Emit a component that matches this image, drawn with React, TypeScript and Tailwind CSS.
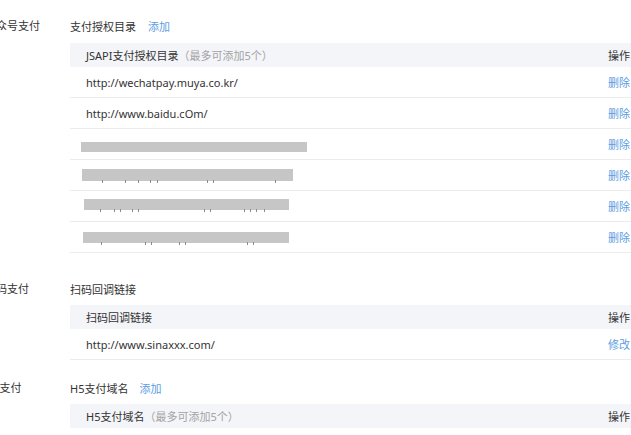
import React from "react";

const font = "font-['Noto_Sans','Noto_Sans_CJK_SC',sans-serif]";

function Header({ children }: { children: React.ReactNode }) {
  return (
    <div className="flex h-[24px] items-center bg-[#f4f5f9] text-[#333]">
      <div className="flex-1 pl-4">{children}</div>
      <div className="w-[62px]">操作</div>
    </div>
  );
}

function Row({ children, action }: { children: React.ReactNode; action: string }) {
  return (
    <div className="flex h-[31px] items-center border-b border-[#ececec] text-[#333]">
      <div className="flex flex-1 items-center pl-4">{children}</div>
      <div className="w-[62px] text-[#5c9de3]">{action}</div>
    </div>
  );
}

function Bar({ cls, ticks }: { cls: string; ticks: number[] }) {
  return (
    <div className={`relative bg-[#c6c6c6] ${cls}`}>
      {ticks.map((t, i) => (
        <span
          key={i}
          className="absolute bottom-[-2px] h-[3px] w-[1px] bg-[#8a8a8a]"
          style={{ left: t }}
        />
      ))}
    </div>
  );
}

export default function App() {
  return (
    <div className={`h-[435px] w-[631px] overflow-hidden bg-white text-[11px] leading-none ${font}`}>
      {/* Section 1 */}
      <div className="flex pt-[16px]">
        <div className="ml-[-15px] w-[85px] shrink-0 leading-[20px] text-[#333]">公众号支付</div>
        <div className="w-[600px] shrink-0">
          <div className="flex h-[20px] items-center text-[#333]">
            支付授权目录<span className="ml-3 text-[#5c9de3]">添加</span>
          </div>
          <div className="mt-[7px]">
            <Header>
              JSAPI支付授权目录<span className="text-[#a3a3a3]">（最多可添加5个）</span>
            </Header>
            <Row action="删除">http://wechatpay.muya.co.kr/</Row>
            <Row action="删除">http://www.baidu.cOm/</Row>
            <Row action="删除">
              <Bar cls="ml-[-5px] mt-[5px] h-[10px] w-[226px]" ticks={[]} />
            </Row>
            <Row action="删除">
              <Bar cls="ml-[-4px] h-[12px] w-[211px]" ticks={[20, 43, 56, 68, 75, 125, 131, 193]} />
            </Row>
            <Row action="删除">
              <Bar cls="ml-[-2px] mt-[-4px] h-[11px] w-[205px]" ticks={[16, 30, 36, 48, 54, 120, 126, 160, 166, 172, 180]} />
            </Row>
            <Row action="删除">
              <Bar cls="ml-[-3px] h-[11px] w-[206px]" ticks={[18, 62, 68, 96, 102, 164, 170]} />
            </Row>
          </div>
        </div>
      </div>

      {/* Section 2 */}
      <div className="mt-[26px] flex">
        <div className="ml-[-15px] w-[85px] shrink-0 leading-[20px] text-[#333]">扫码支付</div>
        <div className="w-[600px] shrink-0">
          <div className="flex h-[20px] items-center text-[#333]">扫码回调链接</div>
          <div className="mt-[6px]">
            <Header>扫码回调链接</Header>
            <Row action="修改">http://www.sinaxxx.com/</Row>
          </div>
        </div>
      </div>

      {/* Section 3 */}
      <div className="mt-[18px] flex">
        <div className="ml-[-15px] w-[85px] shrink-0 leading-[20px] text-[#333]">H5支付</div>
        <div className="w-[600px] shrink-0">
          <div className="flex h-[20px] items-center text-[#333]">
            H5支付域名<span className="ml-[11px] text-[#5c9de3]">添加</span>
          </div>
          <div className="mt-[6px]">
            <Header>
              H5支付域名<span className="text-[#a3a3a3]">（最多可添加5个）</span>
            </Header>
          </div>
        </div>
      </div>
    </div>
  );
}
